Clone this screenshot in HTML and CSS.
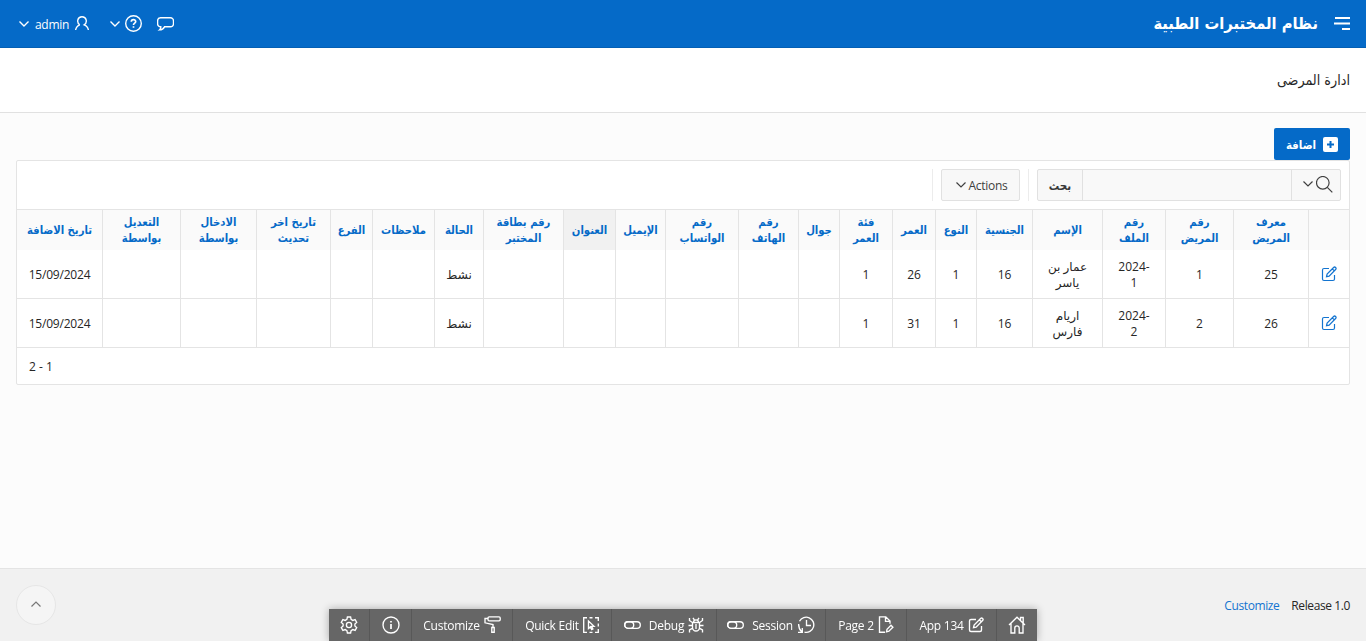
FILE: index.html
```html
<!DOCTYPE html>
<html lang="ar" dir="rtl">
<head>
    <meta charset="UTF-8">
    <meta name="viewport" content="width=device-width, initial-scale=1.0">
    <title>ادارة المرضى</title>
    <link rel="stylesheet" href="styles.css">
</head>
<body>
    <svg class="sprite">
        <symbol id="down" viewBox="0 0 10 6"><path d="M.5.5 5 5 9.5.5"/></symbol>
        <symbol id="edit" viewBox="0 0 16 16"><path d="M8 2.500H3A1.500 1.500 0 0 0 1.500 4v9A1.500 1.500 0 0 0 3 14.500h9a1.500 1.500 0 0 0 1.500-1.500V9M5.500 10.700l.6-2.700 6.500-6.500a1.300 1.300 0 0 1 2 2L8.100 10.100zM11.300 2.800l2 2"/></symbol>
    </svg>

    <header class="header">
        <button class="menu-btn"><svg width="16" height="13" viewBox="0 0 16 13"><path d="M0 6.500h16M1 1h15M8 12h8"/></svg></button>
        <h1 class="logo">نظام المختبرات الطبية</h1>
        <div class="navbar">
            <a class="nav-chat"><svg width="17" height="14" viewBox="0 0 17 14"><path d="M3.500.8h10a3 3 0 0 1 3 3v3a3 3 0 0 1-3 3H7.500C6.500 11.700 5 12.700 2.500 12.900c1-.9 1.400-1.900 1.300-3.100A3 3 0 0 1 .6 6.800v-3a3 3 0 0 1 2.900-3z"/></svg></a>
            <a class="nav-help"><svg width="17" height="17" viewBox="0 0 17 17"><circle cx="8.500" cy="8.500" r="7.800"/><path class="thick" d="M6.300 6.800c0-3 4.400-2.900 4.400-.2 0 1.600-2.200 1.500-2.200 3.300M8.500 11.300v1.500"/></svg><svg class="down" width="10" height="6"><use href="#down"/></svg></a>
            <a class="nav-user"><svg width="14" height="15" viewBox="0 0 14 15"><path d="M4.800 8.900C1.300 6.500 2.400.8 7 .8s5.700 5.700 2.200 8.100c2.400.8 3.700 2.200 4.200 5.100M4.800 8.900C2.400 9.700 1.100 11.100.6 14"/></svg><span>admin</span><svg class="down" width="10" height="6"><use href="#down"/></svg></a>
        </div>
    </header>

    <div class="title-bar"><h2>ادارة المرضى</h2></div>

    <main class="main">
        <button class="add-btn"><svg width="15" height="15" viewBox="0 0 15 15"><rect width="15" height="15" rx="2"/><path d="M7.500 4v7M4 7.500h7"/></svg><span>اضافة</span></button>

        <section class="report">
            <div class="toolbar">
                <div class="search">
                    <button class="search-col"><svg width="17" height="17" viewBox="0 0 17 17"><circle cx="6.800" cy="6.800" r="6.300"/><path d="m11.300 11.300 5 5"/></svg><svg width="10" height="6"><use href="#down"/></svg></button>
                    <input type="text" class="search-text">
                    <button class="search-go">بحث</button>
                </div>
                <div class="actions">
                    <button class="actions-btn" dir="ltr"><svg width="10" height="6"><use href="#down"/></svg><span>Actions</span></button>
                </div>
            </div>

            <table class="patients">
                <colgroup>
                    <col class="w41"><col class="w75"><col class="w68"><col class="w63"><col class="w70"><col class="w56"><col class="w41"><col class="w43"><col class="w53"><col class="w41"><col class="w60"><col class="w73"><col class="w50"><col class="w52"><col class="w80"><col class="w49"><col class="w62"><col class="w42"><col class="w74"><col class="w76"><col class="w78"><col>
                </colgroup>
                <thead>
                    <tr>
                        <th></th>
                        <th>معرف<br>المريض</th>
                        <th>رقم<br>المريض</th>
                        <th>رقم<br>الملف</th>
                        <th>الإسم</th>
                        <th>الجنسية</th>
                        <th>النوع</th>
                        <th>العمر</th>
                        <th>فئة<br>العمر</th>
                        <th>جوال</th>
                        <th>رقم<br>الهاتف</th>
                        <th>رقم<br>الواتساب</th>
                        <th>الإيميل</th>
                        <th class="hover">العنوان</th>
                        <th>رقم بطاقة<br>المختبر</th>
                        <th>الحالة</th>
                        <th>ملاحظات</th>
                        <th>الفرع</th>
                        <th>تاريخ اخر<br>تحديث</th>
                        <th>الادخال<br>بواسطة</th>
                        <th>التعديل<br>بواسطة</th>
                        <th>تاريخ الاضافة</th>
                    </tr>
                </thead>
                <tbody>
                    <tr>
                        <td><a class="edit"><svg width="16" height="16"><use href="#edit"/></svg></a></td>
                        <td>25</td>
                        <td>1</td>
                        <td><bdo dir="ltr">2024-</bdo><br>1</td>
                        <td>عمار بن<br>ياسر</td>
                        <td>16</td>
                        <td>1</td>
                        <td>26</td>
                        <td>1</td>
                        <td></td>
                        <td></td>
                        <td></td>
                        <td></td>
                        <td></td>
                        <td></td>
                        <td>نشط</td>
                        <td></td>
                        <td></td>
                        <td></td>
                        <td></td>
                        <td></td>
                        <td class="date">15/09/2024</td>
                    </tr>
                    <tr>
                        <td><a class="edit"><svg width="16" height="16"><use href="#edit"/></svg></a></td>
                        <td>26</td>
                        <td>2</td>
                        <td><bdo dir="ltr">2024-</bdo><br>2</td>
                        <td>اريام<br>فارس</td>
                        <td>16</td>
                        <td>1</td>
                        <td>31</td>
                        <td>1</td>
                        <td></td>
                        <td></td>
                        <td></td>
                        <td></td>
                        <td></td>
                        <td></td>
                        <td>نشط</td>
                        <td></td>
                        <td></td>
                        <td></td>
                        <td></td>
                        <td></td>
                        <td class="date">15/09/2024</td>
                    </tr>
                </tbody>
            </table>
            <div class="pagination">1 - 2</div>
        </section>
    </main>

    <footer class="footer">
        <div class="footer-text"><span>Release 1.0</span><a>Customize</a></div>
        <a class="to-top"><svg width="10" height="6" viewBox="0 0 10 6"><path d="M.5 5.500 5 1l4.500 4.500"/></svg></a>
    </footer>

    <div class="dev-toolbar">
        <a class="w41"><svg width="18" height="18" viewBox="0 0 18 18"><path d="M1 9 9 1.300 17 9M12.500 4.500V1.500h2.700v5.700M3 7.500V17h3.800v-5a2.200 2.200 0 0 1 4.400 0v5H15V7.500"/></svg></a>
        <a class="w90"><svg width="16" height="16"><use href="#edit"/></svg><span>App 134</span></a>
        <a class="w81"><svg width="16" height="17" viewBox="0 0 16 17"><path d="M7 16.200H1.500V.8h6.300L12 5v2.800M7.500 1v4.300H12M8.500 15.800l.5-2.500 4-4 1.900 1.900-4 4z"/></svg><span>Page 2</span></a>
        <a class="w109"><svg width="18" height="18" viewBox="0 0 18 18"><path d="M7.500 16.200A7.600 7.600 0 1 0 2.500 5.200M1.600 8c0 3 .8 5.500 3 7.800M9.500 4v5.500H14M1 16.300h4.300V12"/></svg><span>Session</span><svg width="17" height="8" viewBox="0 0 17 8"><rect x=".7" y=".7" width="15.600" height="6.600" rx="3.300"/><rect x=".7" y=".7" width="9" height="6.600" rx="3.300"/></svg></a>
        <a class="w105"><svg width="16" height="16" viewBox="0 0 16 16"><path d="M4.500 5.500h7v5a3.500 3.500 0 0 1-7 0zM5.500 5.500C5.500 2 10.500 2 10.500 5.500M1.500 1v2.500l3.200 2.200M14.500 1v2.500l-3.200 2.200M.5 8.500h4M11.500 8.500h4M1.500 15.500V13l3.200-1.800M14.500 15.500V13l-3.200-1.800M8 7v5M5 .8l1.300 2M11 .8l-1.300 2"/></svg><span>Debug</span><svg width="17" height="8" viewBox="0 0 17 8"><rect x=".7" y=".7" width="15.600" height="6.600" rx="3.300"/><rect x=".7" y=".7" width="9" height="6.600" rx="3.300"/></svg></a>
        <a class="w99"><svg width="16" height="16" viewBox="0 0 16 16"><path d="M4 .7H.7V15.300H4M6.500.7h3M12 .7h3.300V4M15.300 6.500v3M12 15.300h3.300V12M6.500 15.300h3M5.500 4v7.500l1.800-1.600 1.400 2.700 1.200-.6-1.300-2.700h2.400z"/></svg><span>Quick Edit</span></a>
        <a class="w101"><svg width="17" height="17" viewBox="0 0 17 17"><rect x="4" y=".8" width="12.200" height="4" rx="1.200"/><path d="M4 2.500H1v4.300l8 1.700v3M7.800 11.500h2.400v4.700H7.800z"/></svg><span>Customize</span></a>
        <a class="w42"><svg width="18" height="18" viewBox="0 0 18 18"><circle cx="9" cy="9" r="8"/><path class="thick" d="M9 8v5M9 5v1.500"/></svg></a>
        <a class="w40"><svg width="18" height="18" viewBox="0 0 18 18"><path d="M7.400 1h3.200l.5 2.400 1.700 1 2.300-.8 1.600 2.800-1.800 1.600v2l1.800 1.600-1.600 2.800-2.300-.8-1.700 1-.5 2.400H7.400l-.5-2.400-1.700-1-2.300.8-1.600-2.800L3.100 10V8L1.300 6.400l1.600-2.800 2.300.8 1.700-1z"/><circle cx="9" cy="9" r="2.600"/></svg></a>
    </div>
</body>
</html>
```

FILE: styles.css
```css
* {
    box-sizing: border-box;
}
body {
    font-family: "Open Sans", "DejaVu Sans", sans-serif;
    font-size: 12px;
    line-height: 16px;
    margin: 0;
    height: 641px;
    display: flex;
    flex-direction: column;
    overflow: hidden;
    background-color: #fcfcfc;
    color: #262626;
}
svg {
    fill: none;
    stroke: currentColor;
    stroke-width: 1.2;
    flex-shrink: 0;
}
.sprite {
    display: none;
}
.thick {
    stroke-width: 1.7;
}
button {
    font-family: inherit;
    font-size: inherit;
    padding: 0;
    border: 0;
    background: none;
    color: inherit;
    display: flex;
    align-items: center;
    justify-content: center;
}
.header {
    display: flex;
    align-items: center;
    height: 48px;
    padding: 0 16px;
    background-color: #056ac8;
    border-bottom: 1px solid #045fb4;
    color: #fff;
}
.menu-btn svg {
    stroke-width: 2;
}
.logo {
    margin: 0 16px 0 0;
    padding-top: 1px;
    font-family: "DejaVu Sans Condensed", "DejaVu Sans", sans-serif;
    font-size: 16.4px;
    line-height: 24px;
    white-space: nowrap;
}
.navbar {
    display: flex;
    align-items: center;
    margin-right: auto;
    padding-left: 3px;
}
.navbar a {
    display: flex;
    align-items: center;
}
.navbar svg {
    stroke-width: 1.4;
}
.navbar span {
    padding-top: 2px;
    font-weight: 500;
    letter-spacing: -0.3px;
}
.nav-help {
    margin-right: 15px;
    gap: 5px;
}
.nav-user {
    margin-right: 21px;
    gap: 6px;
}
.title-bar {
    display: flex;
    align-items: center;
    height: 65px;
    padding: 0 16px;
    background-color: #fff;
    border-bottom: 1px solid #e1e1e1;
}
.title-bar h2 {
    margin: 0;
    font-family: "DejaVu Sans Condensed", "DejaVu Sans", sans-serif;
    font-stretch: condensed;
    font-size: 14.2px;
    font-weight: normal;
    line-height: 20px;
}
.logo,
.patients th,
.search-go {
    font-stretch: condensed;
}
.main {
    flex: 1;
    padding: 15px 16px 0;
}
.add-btn {
    width: 76px;
    height: 32px;
    gap: 7px;
    font-family: "DejaVu Sans Condensed", "DejaVu Sans", sans-serif;
    font-stretch: condensed;
    font-size: 11.4px;
    font-weight: bold;
    color: #fff;
    background-color: #056ac8;
    border-radius: 2px;
}
.add-btn span {
    padding-top: 1px;
}
.add-btn rect {
    fill: #fff;
    stroke: none;
}
.add-btn path {
    stroke: #056ac8;
    stroke-width: 2;
}
.report {
    height: 225px;
    border: 1px solid #e4e4e4;
    border-radius: 2px;
    background-color: #fff;
}
.toolbar {
    display: flex;
    height: 48px;
    padding: 8px;
}
.search {
    display: flex;
    width: 304px;
    height: 32px;
    border: 1px solid #e1e1e1;
    border-radius: 2px;
    background-color: #f8f8f8;
}
.search-col {
    width: 48px;
    padding: 0 7px 2px 4px;
    gap: 3px;
    color: #404040;
    justify-content: flex-start;
}
.search-text {
    flex: 1;
    min-width: 0;
    border: solid #e1e1e1;
    border-width: 0 1px;
    background-color: #f9f9f9;
}
.search-go {
    width: 44px;
    padding-top: 2px;
    font-family: "DejaVu Sans Condensed", "DejaVu Sans", sans-serif;
    font-size: 11.6px;
    font-weight: bold;
    color: #383838;
}
.actions {
    display: flex;
    height: 32px;
    margin-right: 8px;
    padding: 0 8px;
    border: solid #ececec;
    border-width: 0 1px;
}
.actions-btn {
    width: 79px;
    padding-left: 2px;
    gap: 3px;
    border: 1px solid #e1e1e1;
    border-radius: 2px;
    background-color: #f8f8f8;
    color: #404040;
    letter-spacing: -0.3px;
}
.actions-btn span {
    padding-top: 1px;
}
.patients {
    width: 1332px;
    table-layout: fixed;
    border-collapse: separate;
    border-spacing: 0;
    text-align: center;
}
.patients th,
.patients td {
    padding: 0;
    border-left: 1px solid #e4e4e4;
    vertical-align: middle;
}
.patients th:last-child,
.patients td:last-child {
    border-left: 0;
}
.patients th {
    height: 41px;
    padding-top: 2px;
    border-top: 1px solid #e4e4e4;
    background-color: #fafafa;
    color: #056ac8;
    font-family: "DejaVu Sans Condensed", "DejaVu Sans", sans-serif;
    font-size: 11.2px;
    white-space: nowrap;
}
.patients th.hover {
    background-color: #f1f1f1;
}
.patients td {
    height: 49px;
    padding-top: 2px;
    border-bottom: 1px solid #e4e4e4;
}
.patients .date {
    letter-spacing: -0.2px;
}
.edit {
    display: flex;
    justify-content: center;
    padding-bottom: 2px;
    color: #1374d0;
}
.w40 { width: 40px; }
.w41 { width: 41px; }
.w42 { width: 42px; }
.w43 { width: 43px; }
.w49 { width: 49px; }
.w50 { width: 50px; }
.w52 { width: 52px; }
.w53 { width: 53px; }
.w56 { width: 56px; }
.w60 { width: 60px; }
.w62 { width: 62px; }
.w63 { width: 63px; }
.w68 { width: 68px; }
.w70 { width: 70px; }
.w73 { width: 73px; }
.w74 { width: 74px; }
.w75 { width: 75px; }
.w76 { width: 76px; }
.w78 { width: 78px; }
.w80 { width: 80px; }
.w81 { width: 81px; }
.w90 { width: 90px; }
.w99 { width: 99px; }
.w101 { width: 101px; }
.w105 { width: 105px; }
.w109 { width: 109px; }
.pagination {
    padding: 11px 12px 0;
    text-align: left;
}
.footer {
    display: flex;
    align-items: center;
    justify-content: space-between;
    height: 73px;
    padding: 0 16px;
    border-top: 1px solid #e4e4e4;
    background-color: #f1f1f1;
}
.footer-text {
    display: flex;
    gap: 12px;
    padding-top: 2px;
    letter-spacing: -0.4px;
}
.footer-text a {
    color: #1374d0;
}
.to-top {
    display: flex;
    align-items: center;
    justify-content: center;
    width: 40px;
    height: 40px;
    border: 1px solid #e6e6e6;
    border-radius: 50%;
    background-color: #f5f5f5;
    color: #777;
}
.to-top svg {
    margin-bottom: 2px;
}
.dev-toolbar {
    position: fixed;
    bottom: 0;
    left: 329px;
    display: flex;
    height: 32px;
    background-color: #666;
    box-shadow: 0 0 8px rgba(0, 0, 0, 0.3);
    color: #fff;
    letter-spacing: -0.25px;
}
.dev-toolbar a {
    display: flex;
    align-items: center;
    justify-content: center;
    gap: 4px;
    padding-bottom: 1px;
    border-left: 1px solid #585858;
    white-space: nowrap;
}
.dev-toolbar a:last-child {
    border-left: 0;
}
.dev-toolbar svg {
    stroke-width: 1.35;
}
.dev-toolbar span {
    padding-top: 2px;
}
.dev-toolbar span + svg {
    margin-right: 4px;
}
```
